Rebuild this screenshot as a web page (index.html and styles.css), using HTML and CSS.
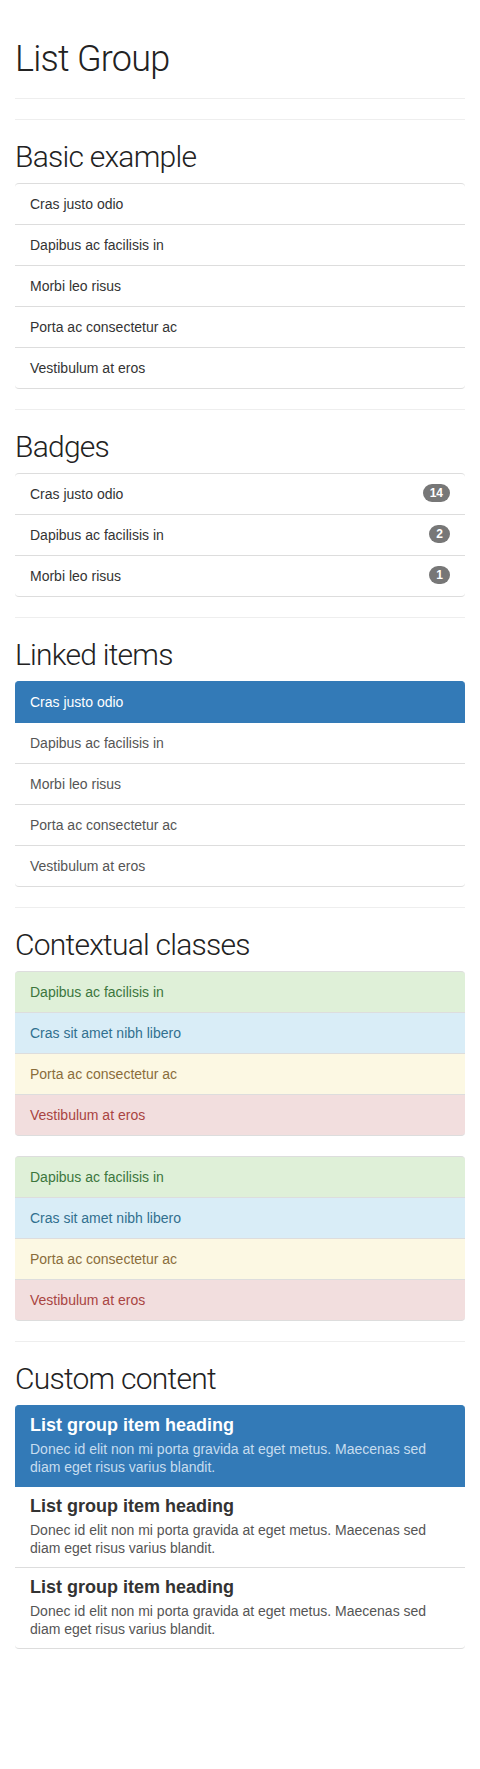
FILE: index.html
```html
<!DOCTYPE html>
<html lang="en">
<head>
<meta charset="utf-8">
<title>List Group</title>
<link rel="stylesheet" href="styles.css">
</head>
<body>
<div class="container">
  <div class="page-header">
    <h1>List Group</h1>
  </div>
  <hr>
  <h2>Basic example</h2>
  <ul class="list-group">
    <li class="list-group-item">Cras justo odio</li>
    <li class="list-group-item">Dapibus ac facilisis in</li>
    <li class="list-group-item">Morbi leo risus</li>
    <li class="list-group-item">Porta ac consectetur ac</li>
    <li class="list-group-item">Vestibulum at eros</li>
  </ul>
  <hr>
  <h2>Badges</h2>
  <ul class="list-group">
    <li class="list-group-item"><span class="badge">14</span>Cras justo odio</li>
    <li class="list-group-item"><span class="badge">2</span>Dapibus ac facilisis in</li>
    <li class="list-group-item"><span class="badge">1</span>Morbi leo risus</li>
  </ul>
  <hr>
  <h2>Linked items</h2>
  <div class="list-group">
    <a class="list-group-item active">Cras justo odio</a>
    <a class="list-group-item link">Dapibus ac facilisis in</a>
    <a class="list-group-item link">Morbi leo risus</a>
    <a class="list-group-item link">Porta ac consectetur ac</a>
    <a class="list-group-item link">Vestibulum at eros</a>
  </div>
  <hr>
  <h2>Contextual classes</h2>
  <ul class="list-group">
    <li class="list-group-item success">Dapibus ac facilisis in</li>
    <li class="list-group-item info">Cras sit amet nibh libero</li>
    <li class="list-group-item warning">Porta ac consectetur ac</li>
    <li class="list-group-item danger">Vestibulum at eros</li>
  </ul>
  <div class="list-group">
    <a class="list-group-item success">Dapibus ac facilisis in</a>
    <a class="list-group-item info">Cras sit amet nibh libero</a>
    <a class="list-group-item warning">Porta ac consectetur ac</a>
    <a class="list-group-item danger">Vestibulum at eros</a>
  </div>
  <hr>
  <h2>Custom content</h2>
  <div class="list-group">
    <a class="list-group-item active">
      <h4 class="list-group-item-heading">List group item heading</h4>
      <p class="list-group-item-text">Donec id elit non mi porta gravida at eget metus. Maecenas sed diam eget risus varius blandit.</p>
    </a>
    <a class="list-group-item link">
      <h4 class="list-group-item-heading">List group item heading</h4>
      <p class="list-group-item-text">Donec id elit non mi porta gravida at eget metus. Maecenas sed diam eget risus varius blandit.</p>
    </a>
    <a class="list-group-item link">
      <h4 class="list-group-item-heading">List group item heading</h4>
      <p class="list-group-item-text">Donec id elit non mi porta gravida at eget metus. Maecenas sed diam eget risus varius blandit.</p>
    </a>
  </div>
</div>
</body>
</html>
```
FILE: styles.css
```css
* {
  box-sizing: border-box;
}

html, body {
  margin: 0;
  padding: 0;
  background: #fff;
}

body {
  font-family: "Liberation Sans", Arial, sans-serif;
  font-size: 14px;
  line-height: 20px;
  color: #333;
}

.container {
  padding: 0 15px;
}

h1, h2 {
  font-family: Roboto, "Liberation Sans", sans-serif;
  font-weight: 300;
  letter-spacing: -0.75px;
  color: #222;
  margin: 20px 0 10px;
}

h1 {
  font-size: 36px;
  line-height: 39px;
}

h2 {
  font-size: 30px;
  line-height: 33px;
}

.page-header {
  margin: 40px 0 20px;
  padding-bottom: 9px;
  border-bottom: 1px solid #eee;
}

hr {
  margin: 20px 0;
  border: 0;
  border-top: 1px solid #eee;
  height: 0;
}

.list-group {
  margin: 0 0 20px;
  padding: 0;
  list-style: none;
}

.list-group-item {
  position: relative;
  display: block;
  padding: 10px 15px;
  margin-bottom: -1px;
  background: #fff;
  border: 1px solid #ddd;
  border-left-width: 0;
  border-right-width: 0;
  text-decoration: none;
}

.list-group-item:first-child {
  border-top-left-radius: 4px;
  border-top-right-radius: 4px;
}

.list-group-item:last-child {
  margin-bottom: 0;
  border-bottom-left-radius: 4px;
  border-bottom-right-radius: 4px;
}

.link {
  color: #555;
}

.active {
  z-index: 2;
  color: #fff;
  background: #337ab7;
  border-color: #337ab7;
}

.badge {
  float: right;
  display: inline-block;
  min-width: 10px;
  padding: 3px 7px;
  font-size: 12px;
  font-weight: bold;
  line-height: 1;
  color: #fff;
  text-align: center;
  white-space: nowrap;
  background: #777;
  border-radius: 10px;
}

.success {
  color: #3c763d;
  background: #dff0d8;
}

.info {
  color: #31708f;
  background: #d9edf7;
}

.warning {
  color: #8a6d3b;
  background: #fcf8e3;
}

.danger {
  color: #a94442;
  background: #f2dede;
}

.list-group-item-heading {
  margin: 0 0 5px;
  font-size: 18px;
  font-weight: bold;
  line-height: 19px;
  color: #333;
}

.list-group-item-text {
  margin: 0;
  line-height: 18px;
}

.active .list-group-item-heading {
  color: #fff;
}

.active .list-group-item-text {
  color: #c7ddef;
}
```
